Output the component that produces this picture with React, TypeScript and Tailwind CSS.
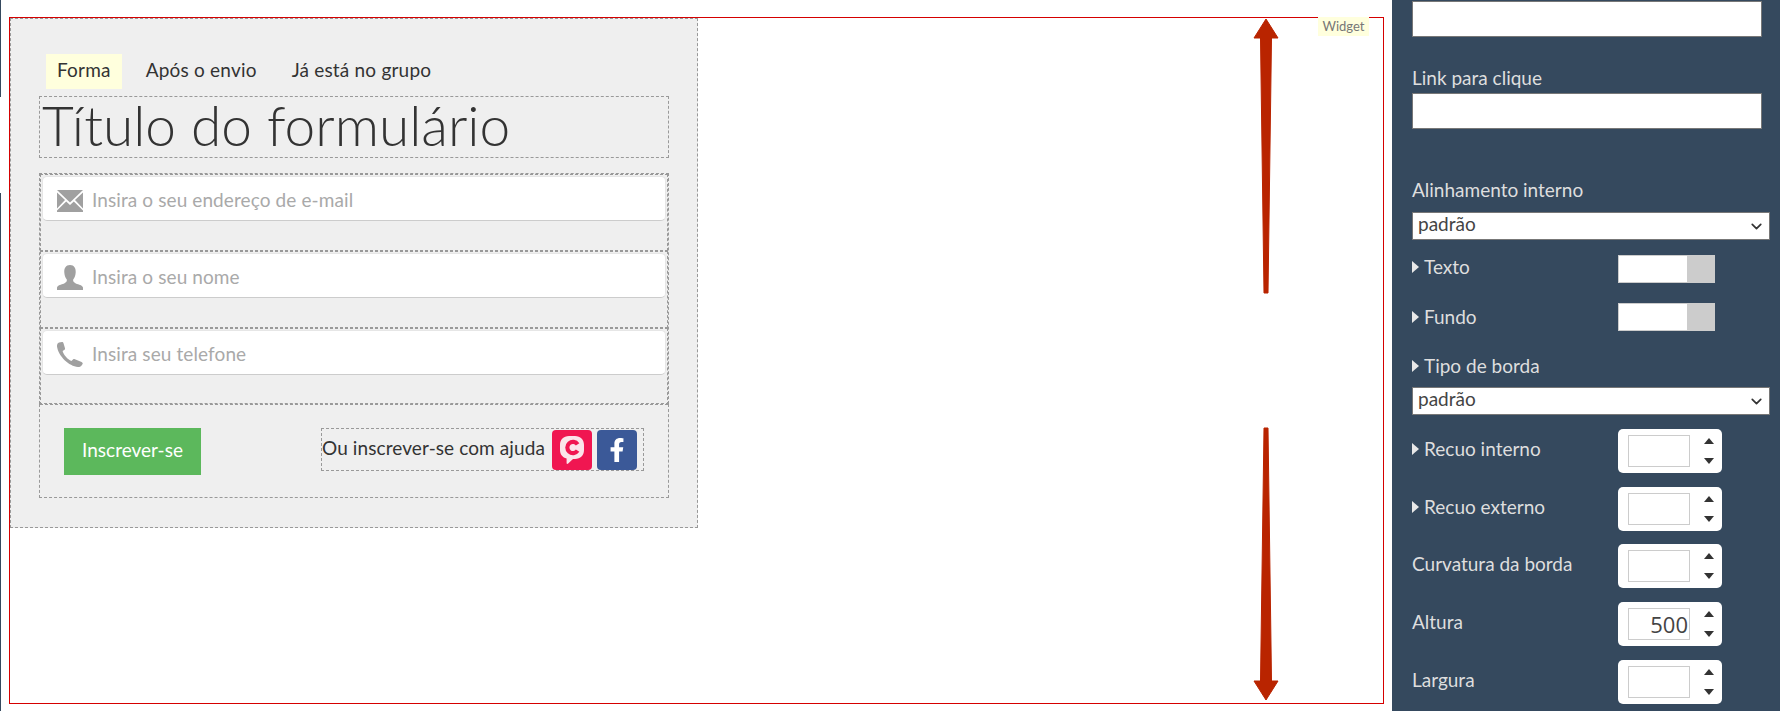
import { FaFacebookF } from "react-icons/fa";
import { ChevronDown } from "lucide-react";

const font = "font-['Lato','Liberation_Sans',sans-serif]";

const MailIcon = () => (
  <svg width="26" height="22" viewBox="0 0 26 22" className="shrink-0">
    <path d="M0 0H26L13 12.5Z" fill="#a0a0a0" />
    <path d="M0 2.5V18.5L8 10Z" fill="#a0a0a0" />
    <path d="M26 2.5V18.5L18 10Z" fill="#a0a0a0" />
    <path d="M0 22V20.5L9.2 11.5L13 15L16.8 11.5L26 20.5V22Z" fill="#a0a0a0" />
  </svg>
);

const UserIcon = () => (
  <svg width="26" height="25" viewBox="0 0 26 25" className="shrink-0">
    <path
      d="M13 0C17.2 0 19 3.4 18.7 7.4C18.5 10.4 17.4 13 16.2 14.6C15.9 16.4 16.6 17.6 18.8 18.4C22 19.6 25.2 20 26 22.4V25H0V22.4C0.8 20 4 19.6 7.2 18.4C9.4 17.6 10.1 16.4 9.8 14.6C8.6 13 7.5 10.4 7.3 7.4C7 3.4 8.8 0 13 0Z"
      fill="#a0a0a0"
    />
  </svg>
);

const PhoneIcon = () => (
  <svg width="26" height="25" viewBox="0 0 26 25" className="shrink-0">
    <path
      d="M2 0.6L5 0C5.8 0 6.3 0.5 6.5 1.2L8 6.2C8.2 7 7.9 7.6 7.2 8L5.6 9C6.6 12.8 10.6 17.4 14.4 19L16 17.5C16.6 17 17.2 16.9 17.9 17.2L24.6 20C25.6 20.5 26 21.2 25.6 22L24.4 23.8C23.6 24.8 22.4 25.2 21 25C12 24.4 1.4 14.4 0 4.6C-0.2 2.6 0.6 1.2 2 0.6Z"
      fill="#a0a0a0"
    />
  </svg>
);

const fields = [
  { icon: <MailIcon />, placeholder: "Insira o seu endereço de e-mail" },
  { icon: <UserIcon />, placeholder: "Insira o seu nome" },
  { icon: <PhoneIcon />, placeholder: "Insira seu telefone" },
];

const Label = ({ text, caret, className }: { text: string; caret?: boolean; className?: string }) => (
  <div className={`flex w-[206px] items-center text-[19px] leading-[24px] text-[#dedede] ${className ?? "pb-[4px]"}`}>
    {caret && (
      <span className="mr-[5px] h-0 w-0 border-y-[6px] border-l-[7px] border-y-transparent border-l-[#e8e8e8]" />
    )}
    {text}
  </div>
);

const Spinner = ({ value }: { value?: string }) => (
  <div className="flex h-[44px] w-[104px] items-center rounded-[5px] bg-white pl-[10px]">
    <input
      readOnly
      value={value ?? ""}
      className="h-[32px] w-[62px] border border-[#ccc] bg-white pr-[1px] text-right text-[22px] text-[#444] outline-none font-['Open_Sans',sans-serif]"
    />
    <div className="ml-[14px] flex h-[32px] flex-col items-center justify-between py-[3px]">
      <span className="h-0 w-0 border-x-[5px] border-b-[6px] border-x-transparent border-b-[#333]" />
      <span className="h-0 w-0 border-x-[5px] border-t-[6px] border-x-transparent border-t-[#333]" />
    </div>
  </div>
);

const SpinnerRow = ({
  label,
  caret,
  value,
  className,
}: {
  label: string;
  caret?: boolean;
  value?: string;
  className?: string;
}) => (
  <div className={`flex items-center ${className ?? ""}`}>
    <Label text={label} caret={caret} />
    <Spinner value={value} />
  </div>
);

const Swatch = ({
  label,
  className,
  labelClass,
}: {
  label: string;
  className?: string;
  labelClass?: string;
}) => (
  <div className={`flex h-[28px] items-center ${className ?? ""}`}>
    <Label text={label} caret className={labelClass} />
    <div className="flex h-[28px] w-[97px] border border-[#ccc] bg-white">
      <div className="flex-1" />
      <div className="w-[27px] bg-[#ccc]" />
    </div>
  </div>
);

const Select = () => (
  <div className="relative h-[28px] w-[358px]">
    <select
      className={`block h-[28px] w-full appearance-none border border-[#777] bg-white pb-[4px] pl-[5px] text-[19px] leading-[20px] text-[#444] ${font}`}
    >
      <option>padrão</option>
    </select>
    <ChevronDown
      size={17}
      strokeWidth={2.4}
      className="pointer-events-none absolute right-[5px] top-[6px] text-[#333]"
    />
  </div>
);

const UpArrow = () => (
  <svg width="26" height="276" viewBox="0 0 26 276" className="absolute left-[1243px] top-[1px]">
    <path d="M13 0L25 19H18.5L15 274H11L7.5 19H1Z" fill="#b92400" stroke="#b92400" strokeLinejoin="round" />
  </svg>
);

const DownArrow = () => (
  <svg width="26" height="274" viewBox="0 0 26 274" className="absolute left-[1243px] top-[409px]">
    <path d="M11 1H15L18.5 254H25L13 273L1 254H7.5Z" fill="#b92400" stroke="#b92400" strokeLinejoin="round" />
  </svg>
);

export default function App() {
  return (
    <div className={`flex h-[711px] w-[1780px] overflow-hidden bg-white ${font}`}>
      <div className="w-[9px] shrink-0">
        <div className="h-[97px] w-[1px] bg-[#35495e]" />
        <div className="mt-[96px] h-[518px] w-[1px] bg-[#35495e]" />
      </div>

      <div className="w-[1383px] shrink-0 pt-[17px]">
        <div className="relative h-[687px] w-[1375px] border border-[#d50000]">
          <div className="h-[510px] w-[688px] border border-dashed border-[#999] bg-[#efefef] pl-[28px] pt-[35px]">
            <div className="flex h-[35px] text-[19px] tracking-[0.2px] text-[#333]">
              <div className="ml-[7px] flex items-center bg-[#ffffdd] px-[11px] pb-[3px]">Forma</div>
              <div className="ml-[24px] flex items-center pb-[3px]">Após o envio</div>
              <div className="ml-[35px] flex items-center pb-[3px]">Já está no grupo</div>
            </div>

            <div className="mt-[7px] flex h-[62px] w-[630px] items-center border border-dashed border-[#999] pb-[4px] pl-[2px]">
              <h1 className="text-[55px] leading-none font-light text-[#333]">Título do formulário</h1>
            </div>

            <div className="mt-[15px] h-[231px] w-[630px] border border-dashed border-[#999]">
              {fields.map((field) => (
                <div key={field.placeholder} className="h-[77px] border border-dashed border-[#999] px-[1px] pt-[1px]">
                  <div className="flex h-[45px] items-center rounded-[5px] border border-[#e6e6e6] border-b-[#ccc] bg-white pl-[14px] pt-[4px]">
                    {field.icon}
                    <input
                      readOnly
                      placeholder={field.placeholder}
                      className="ml-[9px] flex-1 bg-transparent text-[19px] tracking-[0.1px] outline-none placeholder:text-[#a9a9a9]"
                    />
                  </div>
                </div>
              ))}
            </div>

            <div className="flex h-[94px] w-[630px] items-start border border-dashed border-t-0 border-[#999] pl-[24px] pt-[24px]">
              <button className="h-[47px] w-[137px] border border-dashed border-[#5cb85c] bg-[#5cb85c] pb-[2px] text-[19px] text-white">
                Inscrever-se
              </button>
              <div className="ml-[120px] flex h-[43px] w-[323px] items-center border border-dashed border-[#999] pr-[6px]">
                <span className="pb-[3px] text-[19px] tracking-[0.1px] text-[#333]">Ou inscrever-se com ajuda</span>
                <div className="ml-auto flex h-[40px] w-[40px] items-center justify-center rounded-[4px] bg-[#f01651]">
                  <svg width="26" height="30" viewBox="0 0 26 30">
                    <path
                      d="M10 1H16C21.5 1 25 4.5 25 10V15C25 20.5 21.5 24 16 24H14L9.2 28.6C8.2 29.4 7.6 29 7.6 28V23.6C3.6 22.6 1 19.4 1 15V10C1 4.5 4.5 1 10 1Z"
                      fill="#fbe4ea"
                    />
                    <path d="M18.6 9.4A5.6 5.6 0 1 0 18.6 15.6" fill="none" stroke="#f01651" strokeWidth="4.2" />
                  </svg>
                </div>
                <div className="ml-[5px] flex h-[40px] w-[40px] items-center justify-center rounded-[4px] bg-[#3b5998]">
                  <FaFacebookF className="text-[24px] text-white" />
                </div>
              </div>
            </div>
          </div>

          <UpArrow />
          <DownArrow />

          <div className="absolute left-[1308px] top-[-1px] flex h-[19px] w-[51px] items-center justify-center bg-[#ffffdd] text-[13px] text-[#777]">
            Widget
          </div>
        </div>
      </div>

      <aside className="h-[711px] flex-1 overflow-hidden bg-[#35495e] pl-[20px] pt-[1px]">
        <div className="h-[36px] w-[350px] border border-[#777] bg-white" />
        <div className="mt-[27px] h-[29px] text-[19px] leading-[28px] text-[#dedede]">Link para clique</div>
        <div className="h-[36px] w-[350px] border border-[#777] bg-white" />
        <div className="mt-[47px] h-[36px] text-[19px] leading-[28px] text-[#dedede]">Alinhamento interno</div>
        <Select />
        <Swatch label="Texto" className="mt-[15px]" />
        <Swatch label="Fundo" className="mt-[20px]" labelClass="pb-[1px]" />
        <div className="mt-[21px] h-[35px] pt-[2px]">
          <Label text="Tipo de borda" caret />
        </div>
        <Select />
        <SpinnerRow label="Recuo interno" caret className="mt-[14px]" />
        <SpinnerRow label="Recuo externo" caret className="mt-[14px]" />
        <SpinnerRow label="Curvatura da borda" className="mt-[13px]" />
        <SpinnerRow label="Altura" value="500" className="mt-[14px]" />
        <SpinnerRow label="Largura" className="mt-[14px]" />
      </aside>
    </div>
  );
}
